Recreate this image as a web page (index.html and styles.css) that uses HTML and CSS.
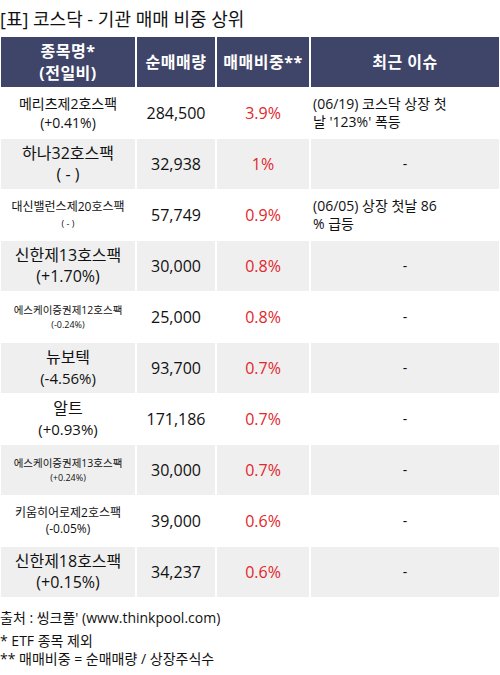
FILE: index.html
```html
<!DOCTYPE html>
<html lang="ko">
<head>
    <meta charset="UTF-8">
    <meta name="viewport" content="width=device-width, initial-scale=1.0">
    <title>코스닥 - 기관 매매 비중 상위</title>
    <link rel="stylesheet" href="styles.css">
</head>
<body>
    <h1 class="title">[표] 코스닥 - 기관 매매 비중 상위</h1>

    <table class="rank-table">
        <thead>
            <tr>
                <th class="col-name">종목명*<br>(전일비)</th>
                <th class="col-qty">순매매량</th>
                <th class="col-ratio">매매비중**</th>
                <th class="col-issue">최근 이슈</th>
            </tr>
        </thead>
        <tbody>
            <tr>
                <td class="name size-m">메리츠제2호스팩<br>(+0.41%)</td>
                <td class="qty">284,500</td>
                <td class="ratio">3.9%</td>
                <td class="issue">(06/19) 코스닥 상장 첫<br>날 '123%' 폭등</td>
            </tr>
            <tr class="gray">
                <td class="name size-l">하나32호스팩<br>( - )</td>
                <td class="qty">32,938</td>
                <td class="ratio">1%</td>
                <td class="issue empty">-</td>
            </tr>
            <tr>
                <td class="name size-s">대신밸런스제20호스팩<br><span class="sub-xs">( - )</span></td>
                <td class="qty">57,749</td>
                <td class="ratio">0.9%</td>
                <td class="issue">(06/05) 상장 첫날 86<br>% 급등</td>
            </tr>
            <tr class="gray">
                <td class="name size-l">신한제13호스팩<br>(+1.70%)</td>
                <td class="qty">30,000</td>
                <td class="ratio">0.8%</td>
                <td class="issue empty">-</td>
            </tr>
            <tr>
                <td class="name size-xs">에스케이증권제12호스팩<br><span class="sub-xs">(-0.24%)</span></td>
                <td class="qty">25,000</td>
                <td class="ratio">0.8%</td>
                <td class="issue empty">-</td>
            </tr>
            <tr class="gray">
                <td class="name size-l">뉴보텍<br><span class="sub-m">(-4.56%)</span></td>
                <td class="qty">93,700</td>
                <td class="ratio">0.7%</td>
                <td class="issue empty">-</td>
            </tr>
            <tr>
                <td class="name size-l">알트<br><span class="sub-m">(+0.93%)</span></td>
                <td class="qty">171,186</td>
                <td class="ratio">0.7%</td>
                <td class="issue empty">-</td>
            </tr>
            <tr class="gray">
                <td class="name size-xs">에스케이증권제13호스팩<br><span class="sub-xs">(+0.24%)</span></td>
                <td class="qty">30,000</td>
                <td class="ratio">0.7%</td>
                <td class="issue empty">-</td>
            </tr>
            <tr>
                <td class="name size-s">키움히어로제2호스팩<br>(-0.05%)</td>
                <td class="qty">39,000</td>
                <td class="ratio">0.6%</td>
                <td class="issue empty">-</td>
            </tr>
            <tr class="gray">
                <td class="name size-l">신한제18호스팩<br>(+0.15%)</td>
                <td class="qty">34,237</td>
                <td class="ratio">0.6%</td>
                <td class="issue empty">-</td>
            </tr>
        </tbody>
    </table>

    <p class="source">출처 : 씽크풀' (www.thinkpool.com)</p>
    <div class="notes">
        <p>* ETF 종목 제외</p>
        <p>** 매매비중 = 순매매량 / 상장주식수</p>
    </div>
</body>
</html>
```

FILE: styles.css
```css
body {
    margin: 0;
    font-family: "Open Sans", "Noto Sans CJK KR", sans-serif;
    color: #111;
    background: #fff;
}
.title {
    margin: 0;
    padding: 6px 0 0 0;
    font-size: 18px;
    font-weight: normal;
    line-height: 26px;
}
.rank-table {
    width: 502px;
    margin: 4px 0 0 -1px;
    border-collapse: separate;
    border-spacing: 2px 1px;
    table-layout: fixed;
}
.rank-table th {
    background-color: #3f4469;
    color: #fff;
    font-size: 16px;
    font-weight: bold;
    line-height: 22px;
    letter-spacing: 0.5px;
    height: 50px;
    padding: 0;
    text-align: center;
}
.col-name { width: 134px; }
.col-qty { width: 78px; }
.col-ratio { width: 92px; }
.rank-table td {
    height: 50px;
    padding: 0;
    text-align: center;
    vertical-align: middle;
}
.gray td {
    background-color: #efefef;
}
.name.size-l { font-size: 16px; line-height: 21px; }
.name.size-m { font-size: 14px; line-height: 19px; }
.name.size-s { font-size: 12px; line-height: 16px; }
.name.size-xs { font-size: 10.5px; line-height: 14px; }
.sub-xs { font-size: 9px; }
.sub-m { font-size: 15px; }
.qty {
    font-size: 16px;
}
.ratio {
    font-size: 16px;
    color: #e3262b;
}
.rank-table td.issue {
    text-align: left;
    font-size: 14px;
    line-height: 18px;
    padding-left: 2px;
}
.rank-table td.issue.empty {
    text-align: center;
    padding-left: 0;
}
.source {
    margin: 10px 0 0 0;
    font-size: 14px;
    line-height: 20px;
}
.notes {
    margin-top: 4px;
    font-size: 14px;
    line-height: 18px;
}
.notes p {
    margin: 0;
}
```
